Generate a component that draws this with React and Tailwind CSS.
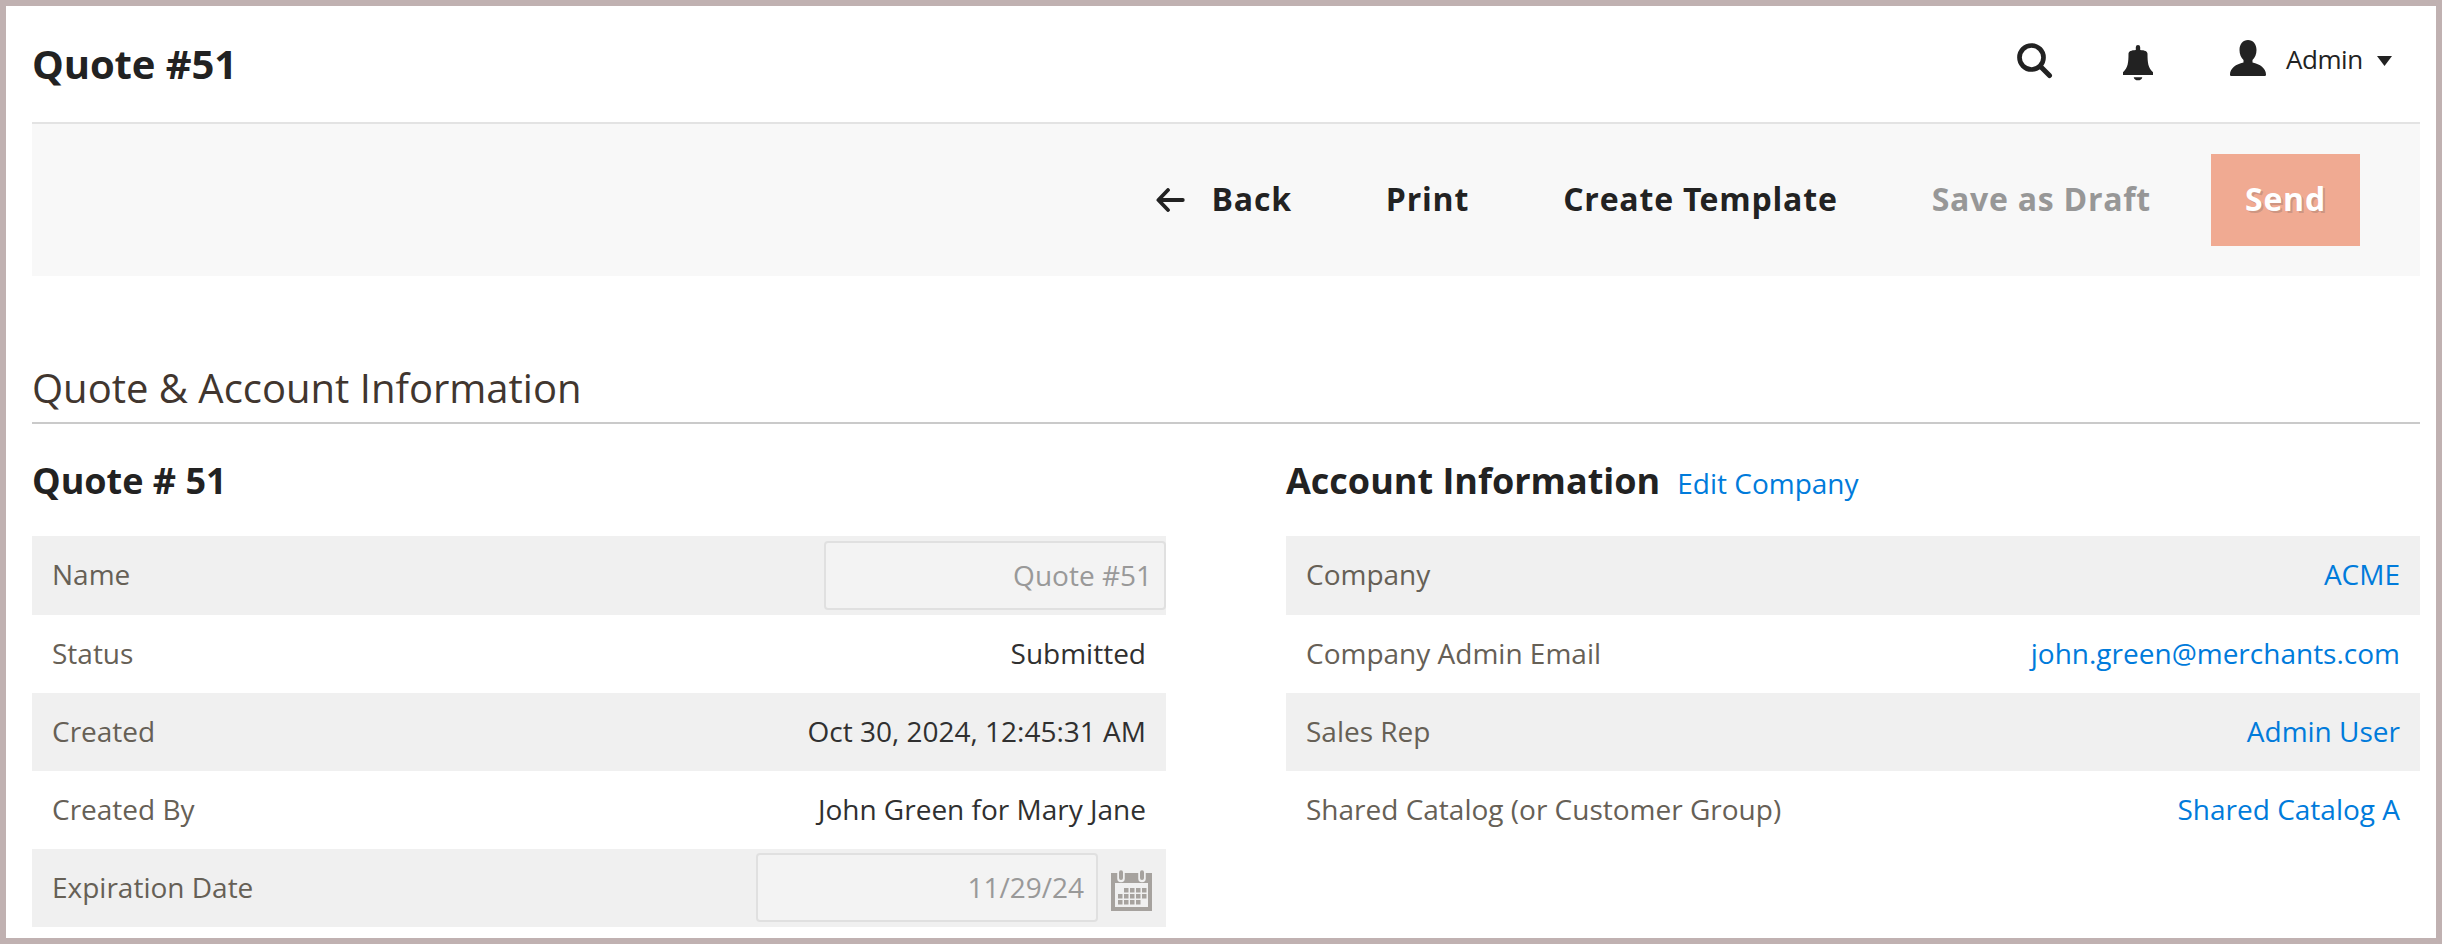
const SearchIcon = () => (
  <svg className="block h-[36px] w-[36px]" viewBox="0 0 36 36" fill="none" stroke="#222" aria-hidden="true">
    <circle cx="14.5" cy="14.5" r="12" strokeWidth="4.7" />
    <path d="M23.5 23.5 L32.5 32.5" strokeWidth="5" strokeLinecap="round" />
  </svg>
);

const BellIcon = () => (
  <svg className="block h-[37px] w-[30px]" viewBox="0 0 30 37" fill="#222" aria-hidden="true">
    <path d="M12.8 5V2.2a2.2 2.2 0 0 1 4.4 0V5c4.500.3 7.300 1.200 7.300 3.800 0 9 .6 14 5.500 18.500V30H0v-2.700C4.900 22.800 5.500 17.800 5.500 8.800 5.500 6.200 8.300 5.300 12.800 5z" />
    <path d="M10.700 32.200h8.600a4.400 4 0 0 1-8.600 0z" />
  </svg>
);

const UserIcon = () => (
  <svg className="block h-[36px] w-[36px]" viewBox="0 0 36 36" fill="#222" aria-hidden="true">
    <path d="M18 0c5 0 8.500 4 8.500 10 0 4-1.500 7.800-4 10v2.500C30 24 36 28.500 36 34.500 36 35.400 35.600 36 34.800 36H1.200C.4 36 0 35.400 0 34.500 0 28.500 6 24 13.500 22.500V20c-2.500-2.200-4-6-4-10C9.500 4 13 0 18 0z" />
  </svg>
);

const BackIcon = () => (
  <svg className="block h-[24px] w-[29px]" viewBox="0 0 29 24" fill="none" stroke="#222" strokeWidth="3.8" strokeLinecap="round" strokeLinejoin="round" aria-hidden="true">
    <path d="M12 2 L2.400 12 L12 22 M3 12 H26.800" />
  </svg>
);

const days = [
  [13, 18], [19, 18], [25, 18], [31, 18],
  [7, 24], [13, 24], [19, 24], [25, 24], [31, 24],
  [7, 30], [13, 30], [19, 30], [25, 30],
];

const CalendarIcon = () => (
  <svg className="block h-[41px] w-[41px]" viewBox="0 0 41 41" aria-hidden="true">
    <path d="M0 3H41V41H0zM4 13V37H37V13z" fill="#a6a29e" fillRule="evenodd" />
    {[10, 31].map((x) => (
      <g key={x} strokeLinecap="round">
        <path d={`M${x} 2 V8.500`} stroke="#f0f0f0" strokeWidth="7.500" />
        <path d={`M${x} 2.200 V8`} stroke="#a6a29e" strokeWidth="4" />
      </g>
    ))}
    {days.map(([x, y]) => (
      <rect key={`${x}-${y}`} x={x} y={y} width="4.500" height="4.500" fill="#a6a29e" />
    ))}
  </svg>
);

const Row = ({ label, height = "h-[78px]", shaded, children, pad = "pr-5" }) => (
  <div className={`flex items-center justify-between pl-5 ${height} ${pad} ${shaded ? "bg-[#f0f0f0]" : ""}`}>
    <span className="pb-[3px] text-[#666056]">{label}</span>
    {children}
  </div>
);

const Value = ({ children }) => <span className="pb-[3px]">{children}</span>;

const Field = ({ children }) => (
  <div className="flex h-[69px] w-[342px] items-center justify-end rounded-[4px] border-2 border-[#e0e0e0] bg-[#f3f3f3] pr-3 pb-px text-[#999]">
    {children}
  </div>
);

const Link = ({ children }) => <a className="text-[#007bdb]">{children}</a>;

export default function App() {
  return (
    <div className="h-[944px] w-[2442px] overflow-hidden border-6 border-[#c0b1b1] bg-white pr-4 pl-[26px] font-['Open_Sans',sans-serif] text-[28px] leading-[38px] text-[#303030]">
      <header className="flex h-[118px] items-start justify-between border-b-2 border-[#e3e3e3] pr-[28px] text-[#222]">
        <h1 className="pt-[30px] text-[40px] leading-[55px] font-bold tracking-[-0.1px]">Quote #51</h1>
        <div className="flex items-start text-[26px] leading-9">
          <div className="pt-[37px]"><SearchIcon /></div>
          <div className="ml-[70px] pt-[39px]"><BellIcon /></div>
          <div className="ml-[77px] pt-[34px]"><UserIcon /></div>
          <span className="ml-5 w-[76px] pt-[35px] tracking-[-0.45px]">Admin</span>
          <svg className="mt-[50px] ml-[15px] block h-[10px] w-[15px]" viewBox="0 0 15 10" fill="#222" aria-hidden="true">
            <path d="M0 0H15L7.500 10z" />
          </svg>
        </div>
      </header>

      <div className="flex h-[152px] items-center justify-end bg-[#f8f8f8] pr-[60px] text-[32px] leading-[43px] font-bold tracking-[0.8px] text-[#222]">
        <div className="flex items-center">
          <BackIcon />
          <span className="ml-[27px] pb-[3px]">Back</span>
        </div>
        <span className="ml-[94px] pb-[3px]">Print</span>
        <span className="ml-[94px] pb-[3px]">Create <span className="tracking-[-2px]">T</span>emplate</span>
        <span className="ml-[94px] pb-[3px] tracking-[0.74px] text-[#979797]">Save as Draft</span>
        <button className="ml-[60px] h-[92px] w-[149px] bg-[#f0aa92] pb-[3px] text-center text-white [text-shadow:2px_2px_0_rgba(60,60,60,0.2)]">Send</button>
      </div>

      <h2 className="mt-[76px] h-[72px] border-b-2 border-[#cacaca] text-[40px] leading-[71px] text-[#41362f]">Quote &amp; Account Information</h2>

      <div className="flex gap-[120px]">
        <section className="w-[1134px]">
          <h3 className="h-[112px] pt-[31px] text-[36px] leading-[52px] font-bold text-[#222]">Quote # 51</h3>
          <Row label="Name" height="h-[79px]" shaded pad="pr-0"><Field>Quote #51</Field></Row>
          <Row label="Status"><Value>Submitted</Value></Row>
          <Row label="Created" shaded><Value>Oct 30, 2024, 12:45:31 AM</Value></Row>
          <Row label="Created By"><Value>John Green for Mary Jane</Value></Row>
          <Row label="Expiration Date" shaded pad="pr-[14px]">
            <div className="flex items-center pb-px">
              <Field>11/29/24</Field>
              <div className="ml-[13px] pt-[5px]"><CalendarIcon /></div>
            </div>
          </Row>
        </section>
        <section className="w-[1134px]">
          <div className="flex h-[112px] items-baseline pt-[31px]">
            <h3 className="text-[36px] leading-[52px] font-bold text-[#222]">Account Information</h3>
            <span className="ml-[17px]"><Link>Edit Company</Link></span>
          </div>
          <Row label="Company" height="h-[79px]" shaded><Value><Link>ACME</Link></Value></Row>
          <Row label="Company Admin Email"><Value><Link>john.green@merchants.com</Link></Value></Row>
          <Row label="Sales Rep" shaded><Value><Link>Admin User</Link></Value></Row>
          <Row label="Shared Catalog (or Customer Group)"><Value><Link>Shared Catalog A</Link></Value></Row>
        </section>
      </div>
    </div>
  );
}
